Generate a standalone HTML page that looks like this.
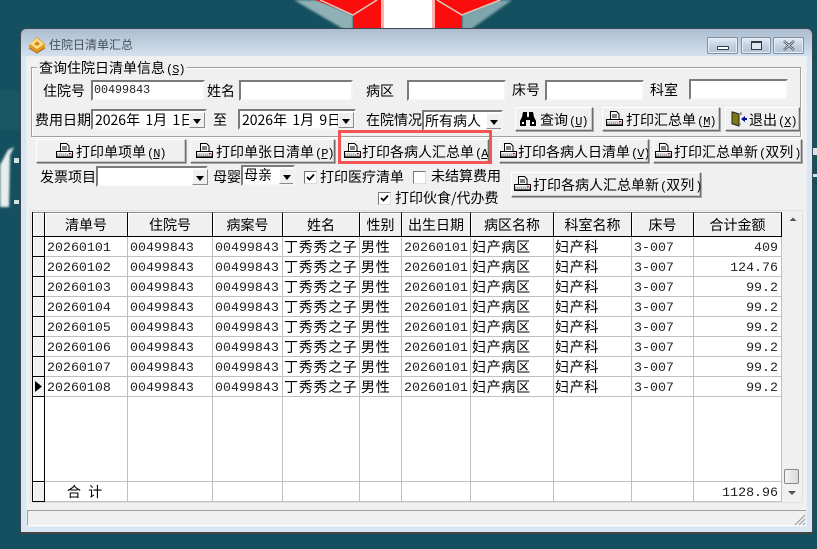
<!DOCTYPE html>
<html><head><meta charset="utf-8"><style>
html,body{margin:0;padding:0;width:817px;height:549px;overflow:hidden;background:#14505f;font-family:"WenQuanYi Zen Hei","Noto Sans CJK SC",sans-serif;font-size:14px;color:#000}
div,span,svg,table{position:absolute}
u,b{position:static}
.t{white-space:nowrap;line-height:20px;height:20px}
.f{background:#fff;box-sizing:border-box;border:2px solid;border-color:#7a7a7a #f4f4f4 #f4f4f4 #7a7a7a;outline:0}
.m{font-family:"Liberation Mono",monospace;font-size:11.7px;line-height:17px;left:1px;top:0;white-space:nowrap;color:#222}
.d{font-family:"WenQuanYi Zen Hei","Noto Sans CJK SC",sans-serif;font-size:14px;line-height:19px;left:2px;top:0;white-space:nowrap;overflow:hidden;height:17px;word-spacing:-.5px}
.b{box-sizing:border-box;background:#f0f0f0;border:1px solid;border-color:#fff #6e6e6e #6e6e6e #fff;box-shadow:1px 1px 0 #a8a8a8,inset -1px -1px 0 #c8c8c8;white-space:nowrap}
.b span{top:1px;line-height:22px;white-space:nowrap}
.b svg{top:3px}
.k{font-family:"Liberation Mono",monospace;font-size:12px;letter-spacing:-1px;margin-left:1px}
.a{box-sizing:border-box;background:#f0f0f0;border:1px solid;border-color:#fff #8a8a8a #8a8a8a #fff;width:16px}
.a:after{content:"";position:absolute;left:3px;top:6px;border:4px solid transparent;border-top:5px solid #000;border-bottom:0}
.c{box-sizing:border-box;width:13px;height:13px;background:#fff;border:1px solid;border-color:#777 #ddd #ddd #777}
.w{box-sizing:border-box;top:37px;height:17px;border:1px solid #7d8ea3;border-radius:2px;background:linear-gradient(#e6edf5,#c3d1e2 50%,#b3c3d8);box-shadow:inset 0 0 0 1px #e6eef7}
table{left:32px;top:212px;width:750px;table-layout:fixed;border-collapse:separate;border-spacing:0;border-left:1px solid #000;background:#fff}
td{padding:2px 0 0 2px;height:17px;line-height:17px;border-right:1px solid #c0c0c0;border-bottom:1px solid #c0c0c0;font-family:"Liberation Mono",monospace;font-size:13.3px;color:#222;white-space:nowrap;overflow:hidden;box-sizing:content-box}
th{padding:0;height:23px;line-height:22px;font-weight:normal;font-size:14px;background:#f0f0f0;border-right:1px solid #000;border-bottom:1px solid #000;border-top:1px solid #888;box-shadow:inset 1px 1px 0 #fff;text-align:center;font-family:"WenQuanYi Zen Hei","Noto Sans CJK SC",sans-serif}
td.z{font-family:"WenQuanYi Zen Hei","Noto Sans CJK SC",sans-serif;font-size:14px;letter-spacing:.7px;padding-left:1px;color:#000}
td.i{background:#f0f0f0;border-right:1px solid #000;border-bottom:1px solid #000;padding:0;height:19px;box-shadow:inset 1px 1px 0 #fff;position:relative}
td.r{text-align:right;padding-right:3px;padding-left:0}
</style></head><body>
<svg style="left:0;top:0" width="817" height="549" viewBox="0 0 817 549">
<defs><filter id="bl"><feGaussianBlur stdDeviation="1"/></filter>
<symbol id="pr" viewBox="0 0 17 16"><path d="M4.5 .5h6l2.5 2.5v6h-8.500z" fill="#fff" stroke="#000"/><path d="M6 4h5M6 6h5" stroke="#000"/><path d="M.5 8.500h16v6h-16z" fill="#d8d8d8" stroke="#000"/><path d="M1 9.500h15" stroke="#fff"/><path d="M1 12h15" stroke="#777" stroke-dasharray="1 1"/><path d="M1 13.500h15" stroke="#555"/><path d="M13 10.500h2" stroke="#e00"/></symbol></defs>
<path d="M294 0H318L353 15V30L345 30Z" fill="#8fb0b5" filter="url(#bl)"/>
<path d="M512 0H498L462 15V30L470 30Z" fill="#7fa5ad" filter="url(#bl)"/>
<path d="M315 0L353 15V28H383V0Z" fill="#fb0d0d"/>
<path d="M433 0H500L462 15V28H433Z" fill="#fb0d0d"/>
<path d="M383 0H433V28H383Z" fill="#fff"/>
<path d="M381 0H384V28H381ZM432 0H435V28H432Z" fill="#ffb0b0"/>
<path d="M320 0L353 15L377 0M437 0L462 15L500 0" fill="none" stroke="#d8c8b8" stroke-width="1.5"/>
<path d="M0 165L8 150L14 147L10 155L9 207H0Z" fill="#e8eeee" filter="url(#bl)"/>
<path d="M14 158h5v5h-5zM14 200h5v4h-5z" fill="#cfe3e3"/>
<path d="M813 148h4v7h-4zM813 174h4v3h-4z" fill="#d8e6e6"/>
<path d="M0 90h20v40H0z" fill="#2b6470" opacity=".35" filter="url(#bl)"/>
</svg>

<div style="left:20px;top:28px;width:793px;height:506px;box-sizing:border-box;border:1px solid #3c4750;border-bottom:2px solid #444;border-radius:6px 6px 0 0;background:linear-gradient(#acbdcf,#d6e3f1 29px,#d9e6f3 29px)"></div>
<div style="left:27px;top:57px;width:779px;height:469px;background:#f0f0f0;box-shadow:0 0 0 1px #e8eef5"></div>

<svg style="left:28px;top:36px" width="18" height="18" viewBox="0 0 18 18"><path d="M1 9L9 1L17 8L17 12L9 17L1 12Z" fill="#e09a20"/><path d="M2 8L9 2L16 8L9 13Z" fill="#fbe08c"/><path d="M6 8l3-3 3 3-3 2z" fill="#d8861a"/><path d="M1 12L9 17L17 12" fill="none" stroke="#a86510"/></svg>
<div class="t" style="left:49px;top:35px;font-size:12px;color:#43505c">住院日清单汇总</div>

<div class="w" style="left:707px;width:31px"><div style="left:9px;top:8px;width:12px;height:4px;box-sizing:border-box;border:1px solid #2e3b4a;background:#fff;border-radius:1px"></div></div>
<div class="w" style="left:741px;width:30px"><div style="left:9px;top:3px;width:11px;height:9px;box-sizing:border-box;border:1px solid #2e3b4a;border-top-width:2px;background:#dfe7f0"></div></div>
<div class="w" style="left:773px;width:31px"><svg style="left:8px;top:2px" width="14" height="11" viewBox="0 0 14 11"><path d="M2 1L12 10M12 1L2 10" stroke="#3a4756" stroke-width="2.4"/><path d="M2 1L12 10M12 1L2 10" stroke="#fff" stroke-width=".8"/></svg></div>

<div style="left:31px;top:67px;width:770px;height:70px;box-sizing:border-box;border:1px solid #a0a0a0;box-shadow:inset 1px 1px 0 #fff,1px 1px 0 #fff"></div>
<div class="t" style="left:37px;top:58px;background:#f0f0f0;padding:0 2px">查询住院日清单信息<span class="k" style="position:static">(<u>S</u>)</span></div>

<div class="t" style="left:43px;top:81px">住院号</div>
<div class="f" style="left:91px;top:80px;width:114px;height:21px"><span class="m">00499843</span></div>
<div class="t" style="left:207px;top:81px">姓名</div>
<div class="f" style="left:239px;top:80px;width:114px;height:21px"></div>
<div class="t" style="left:366px;top:81px">病区</div>
<div class="f" style="left:407px;top:80px;width:99px;height:21px"></div>
<div class="t" style="left:512px;top:80px">床号</div>
<div class="f" style="left:545px;top:80px;width:99px;height:21px"></div>
<div class="t" style="left:650px;top:80px">科室</div>
<div class="f" style="left:689px;top:79px;width:99px;height:21px"></div>

<div class="t" style="left:35px;top:110px">费用日期</div>
<div class="f" style="left:91px;top:109px;width:116px;height:21px;overflow:hidden"><span class="d" style="width:94px">2026年&nbsp; 1月&nbsp; 1日</span><div class="a" style="left:96px;top:1px;height:16px"></div></div>
<div class="t" style="left:213px;top:110px">至</div>
<div class="f" style="left:238px;top:109px;width:118px;height:21px;overflow:hidden"><span class="d" style="width:96px">2026年&nbsp; 1月&nbsp; 9日</span><div class="a" style="left:98px;top:1px;height:16px"></div></div>
<div class="t" style="left:366px;top:110px">在院情况</div>
<div class="f" style="left:422px;top:110px;width:81px;height:21px;overflow:hidden"><span class="t" style="left:1px;top:-1px">所有病人</span><div class="a" style="left:62px;top:1px;height:16px"></div></div>

<div class="b" style="left:515px;top:107px;width:78px;height:24px">
<svg style="left:4px;top:3px" width="16" height="16" viewBox="0 0 16 16"><path d="M3 1h4v5h2V1h4l1 5 2 4v5H10V9H6v6H0v-5l2-4z" fill="#000"/><path d="M2 11h2v2H2zM12 11h2v2h-2z" fill="#fff"/></svg>
<span style="left:24px">查询<span class="k" style="position:static">(<u>U</u>)</span></span></div>
<div class="b" style="left:602px;top:107px;width:118px;height:24px"><svg style="left:3px" width="17" height="16"><use href="#pr"/></svg><span style="left:23px">打印汇总单<span class="k" style="position:static">(<u>M</u>)</span></span></div>
<div class="b" style="left:725px;top:107px;width:75px;height:24px">
<svg style="left:5px;top:3px" width="16" height="16" viewBox="0 0 16 16"><path d="M1 1h1l6 2v12l-6-2H1z" fill="#7d7a14" stroke="#222"/><path d="M9 2h1v2M9 13h1" stroke="#555"/><path d="M10 8l4-3v2h2v2h-2v2z" fill="#00109a"/></svg>
<span style="left:23px">退出<span class="k" style="position:static">(<u>X</u>)</span></span></div>

<div class="b" style="left:36px;top:139px;width:150px;height:24px"><svg style="left:19px" width="17" height="16"><use href="#pr"/></svg><span style="left:39px">打印单项单<span class="k" style="position:static">(<u>N</u>)</span></span></div>
<div class="b" style="left:190px;top:139px;width:145px;height:24px"><svg style="left:5px" width="17" height="16"><use href="#pr"/></svg><span style="left:25px">打印单张日清单<span class="k" style="position:static">(<u>P</u>)</span></span></div>
<div class="b" style="left:342px;top:139px;width:147px;height:24px;overflow:hidden"><svg style="left:1px" width="17" height="16"><use href="#pr"/></svg><span style="left:19px">打印各病人汇总单<span class="k" style="position:static">(<u>A</u>)</span></span></div>
<div style="left:338px;top:130px;width:154px;height:34px;box-sizing:border-box;border:3px solid #f55454"></div>
<div class="b" style="left:499px;top:139px;width:150px;height:24px;overflow:hidden"><svg style="left:0" width="17" height="16"><use href="#pr"/></svg><span style="left:18px">打印各病人日清单<span class="k" style="position:static">(<u>V</u>)</span></span></div>
<div class="b" style="left:653px;top:139px;width:149px;height:24px;overflow:hidden"><svg style="left:1px" width="17" height="16"><use href="#pr"/></svg><span style="left:20px">打印汇总单新<span class="k" style="position:static">(</span>双列<span class="k" style="position:static">)</span></span></div>

<div class="t" style="left:40px;top:167px">发票项目</div>
<div class="f" style="left:96px;top:166px;width:112px;height:21px"><div class="a" style="left:94px;top:1px;height:16px"></div></div>
<div class="t" style="left:213px;top:167px">母婴</div>
<div class="f" style="left:241px;top:165px;width:54px;height:21px;overflow:hidden"><span class="t" style="left:1px;top:-2px">母亲</span><div class="a" style="left:36px;top:1px;height:16px"></div></div>
<div class="c" style="left:304px;top:171px"><svg style="left:1px;top:1px" width="9" height="9" viewBox="0 0 9 9"><path d="M1 4l2.500 2.500L8 1.500" fill="none" stroke="#000" stroke-width="1.800"/></svg></div>
<div class="t" style="left:320px;top:167px">打印医疗清单</div>
<div class="c" style="left:413px;top:171px"></div>
<div class="t" style="left:431px;top:166px">未结算费用</div>
<div class="c" style="left:378px;top:192px"><svg style="left:1px;top:1px" width="9" height="9" viewBox="0 0 9 9"><path d="M1 4l2.500 2.500L8 1.500" fill="none" stroke="#000" stroke-width="1.800"/></svg></div>
<div class="t" style="left:395px;top:188px">打印伙食/代办费</div>
<div class="b" style="left:511px;top:172px;width:190px;height:25px"><svg style="left:2px" width="17" height="16"><use href="#pr"/></svg><span style="left:21px;top:1px">打印各病人汇总单新<span class="k" style="position:static">(</span>双列<span class="k" style="position:static">)</span></span></div>

<div style="left:31px;top:211px;width:771px;height:291px;background:#f0f0f0;box-shadow:0 0 0 1px #e0e0e0"></div>
<table>
<colgroup><col style="width:12px"><col style="width:83px"><col style="width:85px"><col style="width:70px"><col style="width:77px"><col style="width:42px"><col style="width:69px"><col style="width:83px"><col style="width:78px"><col style="width:62px"><col style="width:88px"></colgroup>
<tr><th></th><th>清单号</th><th>住院号</th><th>病案号</th><th>姓名</th><th>性别</th><th>出生日期</th><th>病区名称</th><th>科室名称</th><th>床号</th><th>合计金额</th></tr>
<tr><td class="i"></td><td>20260101</td><td>00499843</td><td>00499843</td><td class="z">丁秀秀之子</td><td class="z">男性</td><td>20260101</td><td class="z">妇产病区</td><td class="z">妇产科</td><td>3-007</td><td class="r">409</td></tr>
<tr><td class="i"></td><td>20260102</td><td>00499843</td><td>00499843</td><td class="z">丁秀秀之子</td><td class="z">男性</td><td>20260101</td><td class="z">妇产病区</td><td class="z">妇产科</td><td>3-007</td><td class="r">124.76</td></tr>
<tr><td class="i"></td><td>20260103</td><td>00499843</td><td>00499843</td><td class="z">丁秀秀之子</td><td class="z">男性</td><td>20260101</td><td class="z">妇产病区</td><td class="z">妇产科</td><td>3-007</td><td class="r">99.2</td></tr>
<tr><td class="i"></td><td>20260104</td><td>00499843</td><td>00499843</td><td class="z">丁秀秀之子</td><td class="z">男性</td><td>20260101</td><td class="z">妇产病区</td><td class="z">妇产科</td><td>3-007</td><td class="r">99.2</td></tr>
<tr><td class="i"></td><td>20260105</td><td>00499843</td><td>00499843</td><td class="z">丁秀秀之子</td><td class="z">男性</td><td>20260101</td><td class="z">妇产病区</td><td class="z">妇产科</td><td>3-007</td><td class="r">99.2</td></tr>
<tr><td class="i"></td><td>20260106</td><td>00499843</td><td>00499843</td><td class="z">丁秀秀之子</td><td class="z">男性</td><td>20260101</td><td class="z">妇产病区</td><td class="z">妇产科</td><td>3-007</td><td class="r">99.2</td></tr>
<tr><td class="i"></td><td>20260107</td><td>00499843</td><td>00499843</td><td class="z">丁秀秀之子</td><td class="z">男性</td><td>20260101</td><td class="z">妇产病区</td><td class="z">妇产科</td><td>3-007</td><td class="r">99.2</td></tr>
<tr><td class="i"><svg style="left:2px;top:4px" width="7" height="11" viewBox="0 0 7 11"><path d="M0 0L7 5.500L0 11Z" fill="#000"/></svg></td><td>20260108</td><td>00499843</td><td>00499843</td><td class="z">丁秀秀之子</td><td class="z">男性</td><td>20260101</td><td class="z">妇产病区</td><td class="z">妇产科</td><td>3-007</td><td class="r">99.2</td></tr>
<tr><td class="i" style="height:84px;background:#fff;box-shadow:none"></td><td style="height:82px"></td><td></td><td></td><td></td><td></td><td></td><td></td><td></td><td></td><td></td></tr>
<tr><td class="i"></td><td class="z" style="padding-left:22px;letter-spacing:2px">合 计</td><td></td><td></td><td></td><td></td><td></td><td></td><td></td><td></td><td class="r">1128.96</td></tr>
</table>

<svg style="left:787px;top:215px" width="12" height="8" viewBox="0 0 12 8"><path d="M2.500 6L6 2.500L9.500 6Z" fill="#555"/></svg>
<div style="left:784px;top:469px;width:15px;height:15px;box-sizing:border-box;border:1px solid #888;border-radius:2px;background:linear-gradient(90deg,#f4f4f4,#d8d8d8)"></div>
<svg style="left:786px;top:489px" width="12" height="8" viewBox="0 0 12 8"><path d="M2 2h8L6 6Z" fill="#555"/></svg>

<div style="left:27px;top:510px;width:779px;height:16px;box-sizing:border-box;border-top:1px solid #a0a0a0;border-left:1px solid #a0a0a0;border-bottom:1px solid #fff;background:#f0f0f0"></div>
<svg style="left:793px;top:514px" width="13" height="12" viewBox="0 0 13 12"><path d="M12 1L2 11M12 5L6 11M12 9L10 11" stroke="#999" fill="none"/></svg>
</body></html>
